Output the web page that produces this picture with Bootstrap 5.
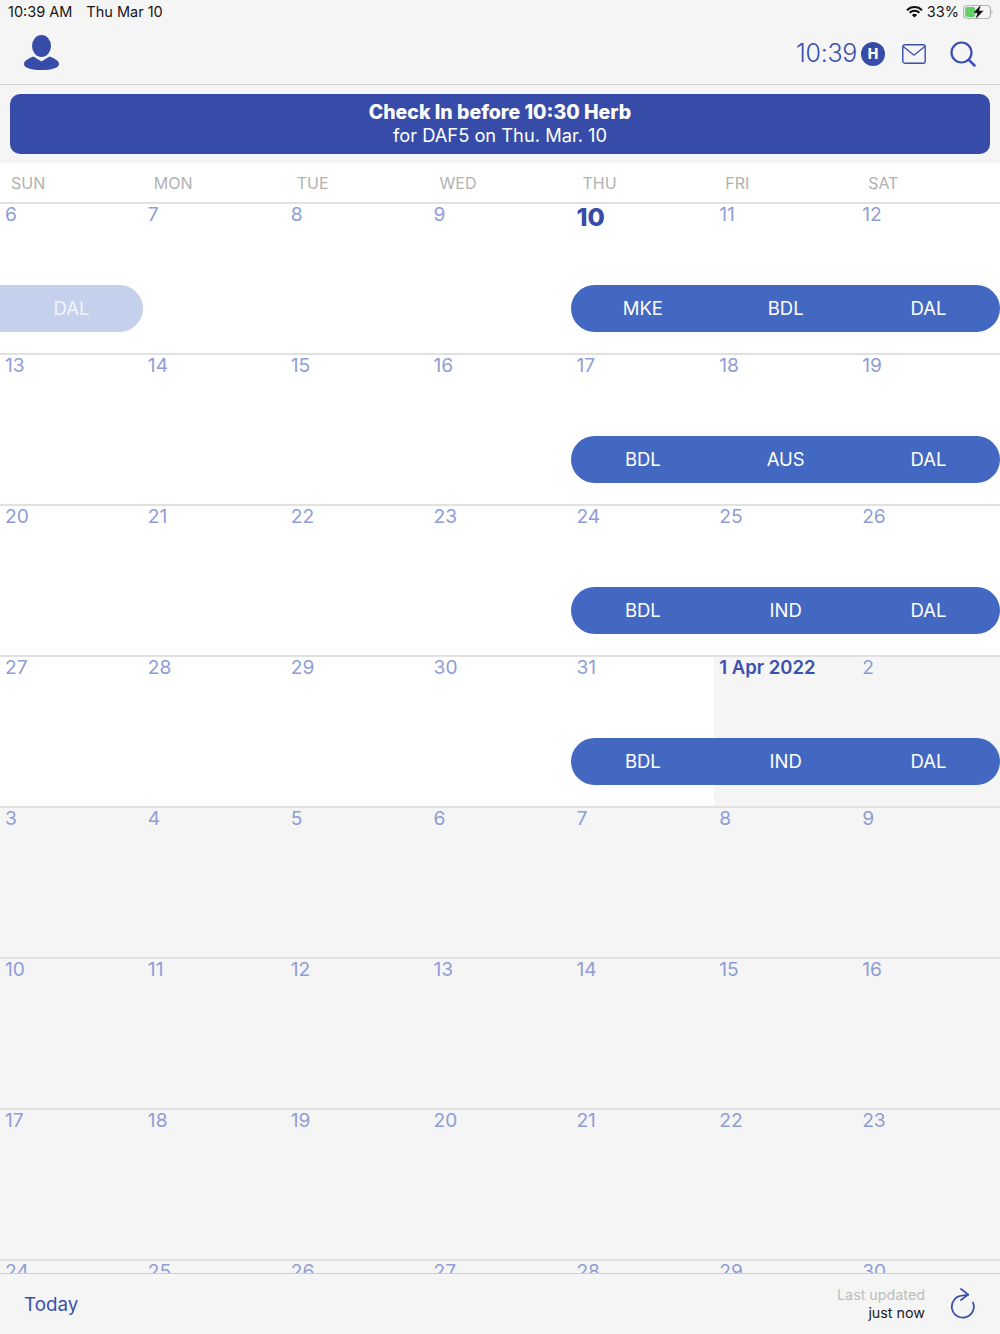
<!DOCTYPE html>
<html lang="en">
<head>
<meta charset="utf-8">
<title>Calendar</title>
<link href="https://cdn.jsdelivr.net/npm/bootstrap@5.3.0/dist/css/bootstrap.min.css" rel="stylesheet">
<style>
html,body{height:1334px;overflow:hidden}
body{font-family:Inter,"Liberation Sans",sans-serif;background:#f5f5f5;color:#111}
.shell{height:1334px}
.topzone{height:85px;border-bottom:1px solid #d2d2d2}
.statusline{height:24px;padding:0 7px 0 8px;font-size:14.5px;line-height:24px;color:#161616}
.statusline .stamp{margin-right:14px}
.headline{height:60px;padding:0 24px 3px 24px}
.rightgroup{padding-top:3px}
.clock{font-size:25px;font-weight:300;color:#3a50ad;letter-spacing:-.3px;margin-right:4px}
.hbadge{width:24px;height:24px;border-radius:50%;background:#374ca9;color:#fff;font-size:14px;font-weight:800;line-height:24px;text-align:center;margin-right:17px}
.bannerzone{height:78px;padding:9px 10px}
.alertbar{height:60px;background:#374ca9;border-radius:10px;color:#fff;font-size:18.3px;line-height:23px;padding-top:7px;text-align:center}
.alertbar strong{font-weight:800;font-size:19.5px;display:block}
.weekdays{height:39px;background:#fff;display:grid;grid-template-columns:repeat(7,1fr)}
.weekdays span{font-size:16px;color:#b1b1b1;padding:9px 0 0 11px;line-height:22px}
.calmain{min-height:0;overflow:hidden}
.weekrow{height:151px;display:grid;grid-template-columns:repeat(7,1fr);grid-template-rows:1fr}
.weekrow>.daycell{grid-row:1;border-top:2px solid #e1e1e1;padding:0 0 0 5px;background:#f5f5f5;color:#8f9dd6;font-size:19.2px;line-height:20px}
.weekrow>.daycell.now{background:#fff}
.weekrow>.daycell:nth-child(1){grid-column:1}.weekrow>.daycell:nth-child(2){grid-column:2}.weekrow>.daycell:nth-child(3){grid-column:3}.weekrow>.daycell:nth-child(4){grid-column:4}.weekrow>.daycell:nth-child(5){grid-column:5}.weekrow>.daycell:nth-child(6){grid-column:6}.weekrow>.daycell:nth-child(7){grid-column:7}
.weekrow>.daycell.today{color:#374ca9;font-weight:800;font-size:25px;line-height:27px}
.weekrow>.daycell.monthstart{color:#3a50ad;font-weight:600;font-size:18.5px}
.tripbar{grid-row:1;height:47px;margin-top:83px;align-self:start;background:#4368c2;color:#fff;font-size:18.5px;line-height:47px;border-radius:24px;z-index:1;display:grid;text-align:center}
.tripbar.three{grid-column:5 / 8;grid-template-columns:repeat(3,1fr)}
.tripbar.past{grid-column:1;background:#c5d1ec;border-radius:0 24px 24px 0;grid-template-columns:1fr;color:#f2f4fb}
.bottombar{height:61px;border-top:1px solid #cfcfcf;padding:0 25px 0 24px;background:#f5f5f5}
.todaylink{font-size:18.8px;color:#3a50ad;padding-top:2px}
.updated{font-size:14.3px;line-height:18px;text-align:right;margin-right:24px}
.updated .lbl{color:#bdbdbd;display:block}
.updated .val{color:#222;display:block}
</style>
</head>
<body>
<div class="shell d-flex flex-column">
  <div class="topzone flex-shrink-0">
    <div class="statusline d-flex align-items-center">
      <span class="stamp">10:39 AM</span><span>Thu Mar 10</span>
      <span class="ms-auto d-flex align-items-center">
        <svg width="17" height="12" viewBox="0 0 17 12" class="me-1"><path d="M1 4.2a10.5 10.5 0 0 1 15 0" fill="none" stroke="#111" stroke-width="2"/><path d="M3.6 6.8a6.8 6.8 0 0 1 9.8 0" fill="none" stroke="#111" stroke-width="2"/><path d="M8.5 11.6 5.9 9a3.6 3.6 0 0 1 5.2 0z" fill="#111"/></svg>
        <span class="me-1">33%</span>
        <svg width="30" height="16" viewBox="0 0 30 16"><rect x=".6" y="1.500" width="26.800" height="13" rx="3.500" fill="none" stroke="#b4b4b4" stroke-width="1.200"/><rect x="2.200" y="3.100" width="10" height="9.800" rx="1.800" fill="#5fd068"/><path d="M28.600 5.700c1 .3 1 4.300 0 4.600z" fill="#a9a9a9"/><path d="M18.500 0 9.500 9.200h4.600L12 16l9-9.600h-4.600z" fill="#111" stroke="#f5f5f5" stroke-width=".6"/></svg>
      </span>
    </div>
    <div class="headline d-flex align-items-center">
      <svg width="36" height="36" viewBox="24 36 36 36"><ellipse cx="41.500" cy="47" rx="9.500" ry="11" fill="#374ca9"/><path d="M33.500 57.500C28 59.500 24 62 24 65c0 4 8 6 17.500 6S59 69 59 65c0-3-4-5.500-9.500-7.500L41.500 62.500z" fill="#374ca9"/></svg>
      <div class="rightgroup ms-auto d-flex align-items-center">
        <span class="clock">10:39</span>
        <span class="hbadge">H</span>
        <svg width="24" height="20" viewBox="0 0 24 20" class="me-4"><rect x=".8" y=".8" width="22.400" height="18.400" rx="2" fill="none" stroke="#3a50ad" stroke-width="1.400"/><path d="M1.200 2.500 12 11.200 22.800 2.500" fill="none" stroke="#3a50ad" stroke-width="1.400"/></svg>
        <svg width="26" height="26" viewBox="0 0 26 26"><circle cx="11.500" cy="11.500" r="10" fill="none" stroke="#3a50ad" stroke-width="2.200"/><path d="M18.800 18.800 24.500 24.500" stroke="#3a50ad" stroke-width="2.500" stroke-linecap="round"/></svg>
      </div>
    </div>
  </div>
  <div class="bannerzone flex-shrink-0">
    <div class="alertbar"><strong>Check In before 10:30 Herb</strong>for DAF5 on Thu. Mar. 10</div>
  </div>
  <div class="weekdays flex-shrink-0"><span>SUN</span><span>MON</span><span>TUE</span><span>WED</span><span>THU</span><span>FRI</span><span>SAT</span></div>
  <div class="calmain flex-grow-1">
    <div class="weekrow">
      <div class="daycell now">6</div><div class="daycell now">7</div><div class="daycell now">8</div><div class="daycell now">9</div><div class="daycell now today">10</div><div class="daycell now">11</div><div class="daycell now">12</div>
      <div class="tripbar past"><span>DAL</span></div>
      <div class="tripbar three"><span>MKE</span><span>BDL</span><span>DAL</span></div>
    </div>
    <div class="weekrow">
      <div class="daycell now">13</div><div class="daycell now">14</div><div class="daycell now">15</div><div class="daycell now">16</div><div class="daycell now">17</div><div class="daycell now">18</div><div class="daycell now">19</div>
      <div class="tripbar three"><span>BDL</span><span>AUS</span><span>DAL</span></div>
    </div>
    <div class="weekrow">
      <div class="daycell now">20</div><div class="daycell now">21</div><div class="daycell now">22</div><div class="daycell now">23</div><div class="daycell now">24</div><div class="daycell now">25</div><div class="daycell now">26</div>
      <div class="tripbar three"><span>BDL</span><span>IND</span><span>DAL</span></div>
    </div>
    <div class="weekrow">
      <div class="daycell now">27</div><div class="daycell now">28</div><div class="daycell now">29</div><div class="daycell now">30</div><div class="daycell now">31</div><div class="daycell monthstart">1 Apr 2022</div><div class="daycell">2</div>
      <div class="tripbar three"><span>BDL</span><span>IND</span><span>DAL</span></div>
    </div>
    <div class="weekrow"><div class="daycell">3</div><div class="daycell">4</div><div class="daycell">5</div><div class="daycell">6</div><div class="daycell">7</div><div class="daycell">8</div><div class="daycell">9</div></div>
    <div class="weekrow"><div class="daycell">10</div><div class="daycell">11</div><div class="daycell">12</div><div class="daycell">13</div><div class="daycell">14</div><div class="daycell">15</div><div class="daycell">16</div></div>
    <div class="weekrow"><div class="daycell">17</div><div class="daycell">18</div><div class="daycell">19</div><div class="daycell">20</div><div class="daycell">21</div><div class="daycell">22</div><div class="daycell">23</div></div>
    <div class="weekrow"><div class="daycell">24</div><div class="daycell">25</div><div class="daycell">26</div><div class="daycell">27</div><div class="daycell">28</div><div class="daycell">29</div><div class="daycell">30</div></div>
  </div>
  <div class="bottombar flex-shrink-0 d-flex align-items-center">
    <span class="todaylink">Today</span>
    <div class="updated ms-auto"><span class="lbl">Last updated</span><span class="val">just now</span></div>
    <svg width="26" height="36" viewBox="949 1286 26 36"><path d="M973 1302.500A11 11 0 1 1 962 1295.700L968 1294.800" fill="none" stroke="#3a50ad" stroke-width="1.800" stroke-linecap="round"/><path d="M961 1289 968.300 1294.600 961 1300" fill="none" stroke="#3a50ad" stroke-width="1.800" stroke-linecap="round" stroke-linejoin="round"/></svg>
  </div>
</div>
<script src="https://cdn.jsdelivr.net/npm/bootstrap@5.3.0/dist/js/bootstrap.bundle.min.js"></script>
</body>
</html>
